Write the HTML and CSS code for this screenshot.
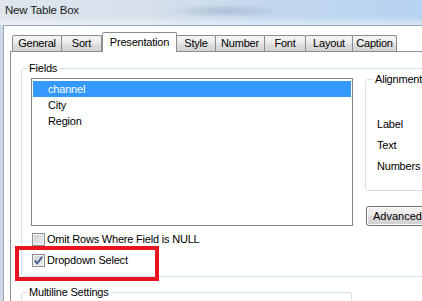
FILE: index.html
```html
<!DOCTYPE html>
<html lang="en">
<head>
    <meta charset="UTF-8">
    <title>New Table Box</title>
    <link rel="stylesheet" href="styles.css">
</head>
<body>
    <div class="window">
        <div class="title-bar">New Table Box</div>
        <div class="client">
            <div class="tabs">
                <div class="tab">General</div>
                <div class="tab">Sort</div>
                <div class="tab active">Presentation</div>
                <div class="tab">Style</div>
                <div class="tab">Number</div>
                <div class="tab">Font</div>
                <div class="tab">Layout</div>
                <div class="tab">Caption</div>
            </div>
            <div class="tab-panel">
                <fieldset class="group fields-group">
                    <legend>Fields</legend>
                    <div class="fields-row">
                        <div class="fields-left">
                            <ul class="listbox">
                                <li class="selected">channel</li>
                                <li>City</li>
                                <li>Region</li>
                            </ul>
                            <label class="check">
                                <span class="check-box"></span>
                                <span>Omit Rows Where Field is NULL</span>
                            </label>
                            <label class="check">
                                <span class="check-box">
                                    <svg width="11" height="11" viewBox="0 0 11 11">
                                        <path d="M1.8 5.6 L4.3 8.3 L9.2 1.8" fill="none" stroke="#47598f" stroke-width="1.9"/>
                                    </svg>
                                </span>
                                <span>Dropdown Select</span>
                                <span class="callout"></span>
                            </label>
                        </div>
                        <div class="fields-right">
                            <fieldset class="group align-group">
                                <legend>Alignment</legend>
                                <div class="align-row">Label</div>
                                <div class="align-row">Text</div>
                                <div class="align-row">Numbers</div>
                            </fieldset>
                            <button class="button">Advanced...</button>
                        </div>
                    </div>
                </fieldset>
                <fieldset class="group multiline-group">
                    <legend>Multiline Settings</legend>
                </fieldset>
            </div>
        </div>
    </div>
</body>
</html>
```

FILE: styles.css
```css
* {
    box-sizing: border-box;
}

html,
body {
    overflow: hidden;
}

body {
    margin: 0;
    font-family: "Liberation Sans", Arial, sans-serif;
    font-size: 11px;
    letter-spacing: -0.2px;
    color: #000;
    background: #c6d6e8;
}

.window {
    width: 422px;
    height: 301px;
    overflow: hidden;
    background: linear-gradient(90deg, #cdd9e6, #c4d6ea);
}

.title-bar {
    height: 25px;
    padding: 4px 0 0 5px;
    font-size: 11.5px;
    line-height: 13px;
    color: #1b1b1b;
    background:
        radial-gradient(ellipse 60px 7px at 225px 11px, rgba(70, 95, 130, 0.22), rgba(70, 95, 130, 0)),
        linear-gradient(180deg, rgba(255, 255, 255, 0) 65%, rgba(255, 255, 255, 0.45) 100%),
        linear-gradient(90deg, #dee5ed 0%, #d6e0eb 35%, #c3d8ee 65%, #b6d3f1 100%);
}

.client {
    width: 600px;
    height: 276px;
    margin-left: 3px;
    border-top: 1px solid #97a5b6;
    border-left: 1px solid #97a5b6;
    background: #fff;
}

/* tab strip */
.tabs {
    display: flex;
    align-items: flex-end;
    height: 19px;
    margin: 6px 0 0 6px;
    padding-left: 2px;
}

.tab {
    height: 16px;
    margin-right: -1px;
    border: 1px solid #898c95;
    border-bottom: 0;
    border-radius: 2px 2px 0 0;
    line-height: 15px;
    text-align: center;
    white-space: nowrap;
    background: linear-gradient(#f4f4f4, #ececec 45%, #dedede 55%, #d2d2d2);
}

.tab:nth-child(1) { width: 50px; }
.tab:nth-child(2) { width: 41px; }
.tab:nth-child(4) { width: 40px; }
.tab:nth-child(5) { width: 50px; }
.tab:nth-child(6) { width: 42px; }
.tab:nth-child(7) { width: 48px; }
.tab:nth-child(8) { width: 45px; }

.tab.active {
    position: relative;
    z-index: 1;
    width: 75px;
    height: 20px;
    margin: 0 -1px -1px 1px;
    padding-top: 2px;
    background: #fff;
}

.tab-panel {
    position: relative;
    margin-left: 6px;
    padding: 10px 0 0 10px;
    border-top: 1px solid #898c95;
    border-left: 1px solid #898c95;
    height: 260px;
}

/* group boxes */
.group {
    margin: 0;
    min-width: 0;
    border: 1px solid #d5dfe5;
    border-radius: 3px;
}

.group legend {
    margin-left: -4px;
    padding: 0 2px;
    line-height: 13px;
}

.fields-group {
    width: 540px;
    padding: 0 0 9px 9px;
}

.fields-row {
    display: flex;
    gap: 12px;
}

.fields-left {
    flex: none;
    width: 322px;
}

.listbox {
    height: 148px;
    margin: 3px 0 0;
    padding: 2px 1px;
    list-style: none;
    border: 1px solid #828790;
}

.listbox li {
    height: 16px;
    padding-left: 15px;
    line-height: 16px;
}

.listbox li.selected {
    background: #3399ff;
    color: #fff;
}

.check {
    position: relative;
    display: flex;
    align-items: center;
    gap: 2px;
    height: 13px;
    margin: 7px 0 0 1px;
    line-height: 13px;
}

.check + .check {
    margin-top: 8px;
}

.check-box {
    width: 13px;
    height: 13px;
    border: 1px solid #8e8f8f;
    box-shadow: inset 0 0 0 1px #f4f4f4;
    background: linear-gradient(135deg, #cbcfd5, #eeeff1);
}

.check-box svg {
    display: block;
}

/* red annotation frame round the option */
.callout {
    position: absolute;
    left: -17px;
    top: -8px;
    width: 144px;
    height: 35px;
    border: 4px solid #e8141f;
}

.fields-right {
    flex: none;
    width: 150px;
    margin-top: -2px;
}

.align-group {
    width: 150px;
    padding: 0 0 13px 11px;
}

.align-row:first-of-type {
    margin-top: 28px;
}

.align-row {
    line-height: 21px;
}

.button {
    display: block;
    width: 80px;
    height: 20px;
    margin: 15px 0 0 1px;
    padding: 0 0 0 6px;
    font: inherit;
    text-align: left;
    color: #000;
    border: 1px solid #707070;
    border-radius: 3px;
    box-shadow: inset 0 0 0 1px #fcfcfc;
    background: linear-gradient(#f2f2f2, #ebebeb 45%, #dddddd 50%, #cfcfcf);
}

.multiline-group {
    width: 331px;
    height: 60px;
    margin-top: 9px;
    padding: 0 0 0 9px;
}
```
